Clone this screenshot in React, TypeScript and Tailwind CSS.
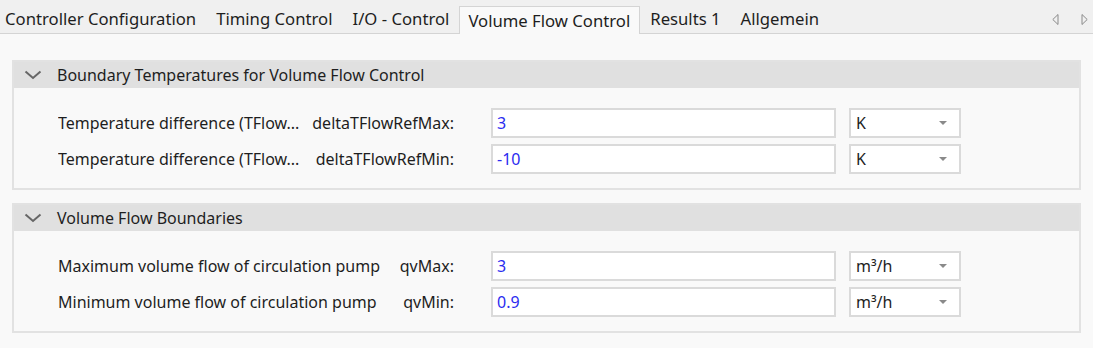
type Row = { desc: string; name: string; value: string; unit: string };

const sections: { title: string; rows: Row[] }[] = [
  {
    title: 'Boundary Temperatures for Volume Flow Control',
    rows: [
      { desc: 'Temperature difference (TFlow...', name: 'deltaTFlowRefMax:', value: '3', unit: 'K' },
      { desc: 'Temperature difference (TFlow...', name: 'deltaTFlowRefMin:', value: '-10', unit: 'K' },
    ],
  },
  {
    title: 'Volume Flow Boundaries',
    rows: [
      { desc: 'Maximum volume flow of circulation pump', name: 'qvMax:', value: '3', unit: 'm³/h' },
      { desc: 'Minimum volume flow of circulation pump', name: 'qvMin:', value: '0.9', unit: 'm³/h' },
    ],
  },
];

const tabs = ['Controller Configuration', 'Timing Control', 'I/O - Control', 'Volume Flow Control', 'Results 1', 'Allgemein'];

function Field({ row }: { row: Row }) {
  return (
    <div className="flex items-center h-[30px]">
      <div className="w-[396px] flex items-center text-[#1e1e1e]">
        <span className="whitespace-nowrap overflow-hidden">{row.desc}</span>
        <span className="ml-auto pl-[4px] whitespace-nowrap">{row.name}</span>
      </div>
      <div className="ml-[37px] w-[345px] h-[30px] border-2 border-[#dadada] bg-white flex items-center px-[4px] text-[#2b2bf0]">
        {row.value}
      </div>
      <div className="ml-[13px] w-[112px] h-[30px] border-2 border-[#dadada] bg-white flex items-center justify-between pl-[5px] pr-[12px] text-[#1e1e1e]">
        <span>{row.unit}</span>
        <svg width="8" height="5" viewBox="0 0 8 5">
          <path d="M0 0 L8 0 L4 4 Z" fill="#8a8a8a" />
        </svg>
      </div>
    </div>
  );
}

export default function App() {
  return (
    <div
      className="w-[1093px] h-[348px] bg-[#f9f9f9] text-[16px] overflow-hidden"
      style={{ fontFamily: '"Noto Sans", "Open Sans", sans-serif' }}
    >
      <div className="h-[34px] bg-[#f0f0f0] border-b border-[#d4d4d4] flex items-end pl-[5px] text-[16.7px]">
        {tabs.map((t) => {
          const active = t === 'Volume Flow Control';
          return active ? (
            <div
              key={t}
              className="h-[28px] -mb-px pl-[8px] pr-[9px] bg-[#f9f9f9] border border-b-0 border-[#d4d4d4] flex items-center text-[#1e1e1e] whitespace-nowrap"
            >
              {t}
            </div>
          ) : (
            <div key={t} className="h-[28px] px-[10px] first:pl-0 flex items-center text-[#1e1e1e] whitespace-nowrap">
              {t}
            </div>
          );
        })}
        <div className="ml-auto h-[28px] flex items-center gap-[22px] pr-[5px]">
          <svg width="7" height="11" viewBox="0 0 7 11">
            <path d="M6 0.5 L0.8 5.5 L6 10.5 Z" fill="none" stroke="#8a8a8a" strokeWidth="1" />
          </svg>
          <svg width="7" height="11" viewBox="0 0 7 11">
            <path d="M1 0.5 L6.2 5.5 L1 10.5 Z" fill="none" stroke="#8a8a8a" strokeWidth="1" />
          </svg>
        </div>
      </div>

      <div className="px-[12px] pt-[26px] flex flex-col gap-[13px]">
        {sections.map((s) => (
          <div key={s.title} className="w-[1069px] border-2 border-[#e2e2e2] bg-[#f9f9f9]">
            <div className="h-[26px] bg-[#e0e0e0] flex items-center text-[#1e1e1e]">
              <svg className="ml-[10px]" width="18" height="10" viewBox="0 0 18 10">
                <path d="M1.5 1.5 L9 8 L16.5 1.5" fill="none" stroke="#666" strokeWidth="2" />
              </svg>
              <span className="ml-[15px]">{s.title}</span>
            </div>
            <div className="pl-[44px] pt-[20px] pb-[14px] flex flex-col gap-[6px]">
              {s.rows.map((r) => (
                <Field key={r.name} row={r} />
              ))}
            </div>
          </div>
        ))}
      </div>
    </div>
  );
}
